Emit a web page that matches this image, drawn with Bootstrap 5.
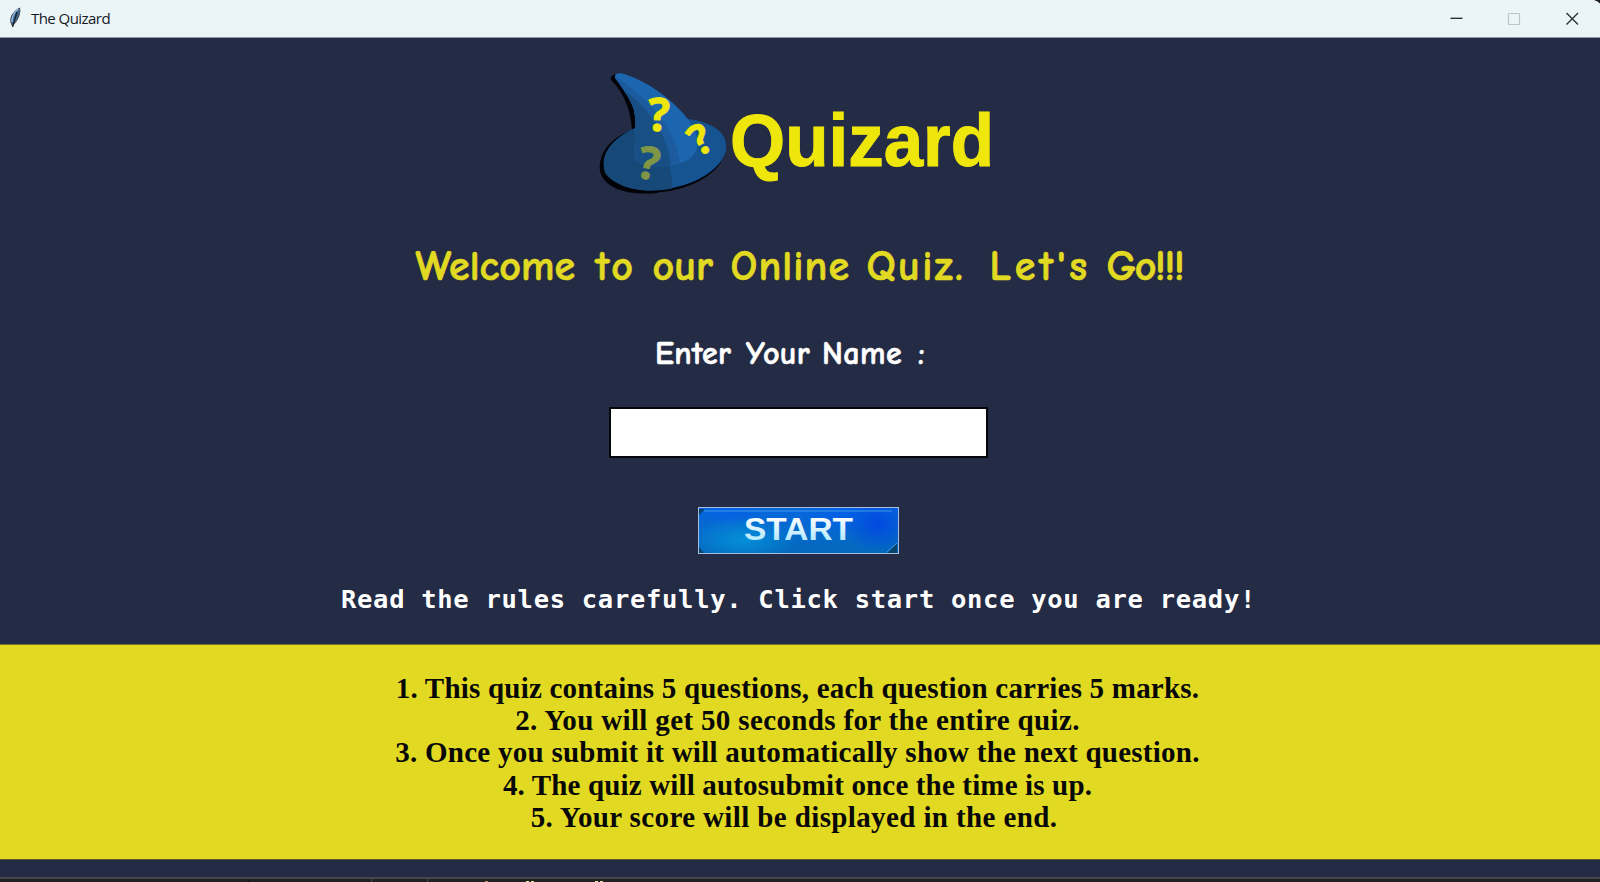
<!DOCTYPE html>
<html lang="en">
<head>
<meta charset="utf-8">
<meta name="viewport" content="width=device-width, initial-scale=1">
<title>The Quizard</title>
<link href="https://cdn.jsdelivr.net/npm/bootstrap@5.3.0/dist/css/bootstrap.min.css" rel="stylesheet">
<style>
  html, body { height: 100%; }
  body { background: #242b44; font-family: "Liberation Sans", sans-serif; }
  .app { height: 882px; }
  .titlebar { height: 38px; background: #ebf5f8; border-bottom: 1px solid #8d95a6; color: #15191d; font: 15px/37px "Open Sans", "Noto Sans", sans-serif; }
  .titlebar .caption { letter-spacing: -.55px; }
  .logo { height: 172px; }
  .comic { font-family: "Comic Sans MS", "Comic Neue", "Open Sans", sans-serif; font-weight: 700; white-space: pre; }
  .comic span { display: inline-block; }
  .welcome { height: 114px; padding-top: 27px; font-size: 42px; line-height: 60px; color: #e2da22; -webkit-text-stroke: .7px #e2da22; }
  .welcome span:nth-child(1) { width: 180px; }
  .welcome span:nth-child(2) { width: 57px; letter-spacing: 3px; }
  .welcome span:nth-child(3) { width: 78px; }
  .welcome span:nth-child(4) { width: 136px; letter-spacing: 1.1px; }
  .welcome span:nth-child(5) { width: 123px; letter-spacing: 2.4px; }
  .welcome span:nth-child(6) { width: 117px; letter-spacing: 3.8px; }
  .welcome span:nth-child(7) { width: 78px; letter-spacing: -1.5px; }
  .ask { height: 83px; font-size: 32px; line-height: 60px; color: #fff; padding-right: 15px; -webkit-text-stroke: .6px #fff; }
  .ask span:nth-child(1) { width: 91px; letter-spacing: .3px; }
  .ask span:nth-child(2) { width: 76px; letter-spacing: .3px; }
  .ask span:nth-child(3) { width: 96px; letter-spacing: .5px; }
  .ask span:nth-child(4) { width: 12px; }
  .name-box { width: 379px; height: 51px; border: 2px solid #05060a; border-radius: 0; background: #fff; margin-right: 4px; }
  .start { width: 201px; height: 47px; margin-top: 49px; margin-right: 4px; border: 1.5px solid #a9bede; border-radius: 0; overflow: hidden;
    background: radial-gradient(ellipse 55px 22px at 22% 70%, #0590d8, transparent), radial-gradient(ellipse 35px 28px at 90% 35%, #0249e0, transparent), radial-gradient(ellipse 50px 22px at 72% 10%, #0460e6, transparent), radial-gradient(ellipse 40px 18px at 15% 0%, #0560e8, transparent), linear-gradient(#0668dc, #0469bd); }
  .ready { height: 90px; padding: 27px 3px 0 0; font: bold 25.5px/36px "DejaVu Sans Mono", monospace; letter-spacing: .7px; white-space: pre; color: #fff; }
  .rules { height: 216px; padding: 27px 5px 0 0; background: #e2da22; border-top: 1px solid #70712e; border-bottom: 1px solid #5d5e2b; color: #080808; font: bold 29px/32.2px "Liberation Serif", serif; }
  .rules div { white-space: pre; }
  .rules div:nth-child(1) { letter-spacing: .21px; }
  .rules div:nth-child(2) { letter-spacing: .35px; }
  .rules div:nth-child(3) { letter-spacing: .26px; }
  .rules div:nth-child(4) { letter-spacing: .15px; }
  .rules div:nth-child(5) { letter-spacing: .38px; padding-right: 7px; }
  .gap-strip { height: 17px; }
  .desk { height: 5px; background: #202020; border-top: 2px solid #45454c; }
</style>
</head>
<body class="overflow-hidden">
<div class="app d-flex flex-column">
  <header class="titlebar d-flex align-items-center justify-content-between flex-shrink-0">
    <div class="d-flex align-items-center">
      <svg width="31" height="37" viewBox="0 0 31 37"><path d="M12.500 26C9.500 21 9.500 14 19.500 8C21 12 18 20 14 24Z" fill="#3f638c" stroke="#3d4651" stroke-width="1"/><path d="M18.500 9C14 12 12 17 12 22" fill="none" stroke="#8fbde8" stroke-width="1.500"/><path d="M17 12L12.600 27" stroke="#18212e" stroke-width="1.200"/></svg>
      <span class="caption">The Quizard</span>
    </div>
    <svg width="160" height="37" viewBox="0 0 160 37" fill="none"><path d="M10.500 18.300h12" stroke="#222" stroke-width="1.300"/><rect x="68.500" y="13.500" width="11" height="11" rx=".8" stroke="#bcc4c8" stroke-width="1.200"/><path d="M126.500 13L138 24.500M138 13L126.500 24.500" stroke="#2b3033" stroke-width="1.400"/><path d="M154 0Q158 1 160 3.500V0Z" fill="#1d1d1d"/></svg>
  </header>

  <div class="logo flex-shrink-0">
    <svg width="1600" height="172" viewBox="0 38 1600 172" class="d-block">
      <defs><clipPath id="cone"><path d="M615 75C618 72 623 73 630 76C656 86 680 107 690 122C701 138 700 154 686 161C668 169 638 168 634 157C635 142 637 124 634 110C631 100 622 87 615 78Z"/></clipPath></defs>
      <path d="M617 74C612 74 609 78 612 81C622 91 631 108 632 130C612 137 598 152 600 171C604 188 626 196 658 193L640 150L637 112Z" fill="#020307"/>
      <ellipse cx="663.500" cy="156.500" rx="62" ry="35" transform="rotate(-10 663.500 156.500)" fill="#020307"/>
      <ellipse cx="665" cy="154.500" rx="62" ry="34.500" transform="rotate(-11 665 154.500)" fill="#155391"/>
      <path d="M634 130C660 145 672 158 672 188.500C646 194 617 189 605 173C599 154 614 137 634 130Z" fill="#164977"/>
      <g clip-path="url(#cone)">
        <path d="M610 68H705V175H610Z" fill="#1c66b0"/>
        <path d="M615 76C650 100 676 126 682 172H615Z" fill="#1c5c9e"/>
        <path d="M622 89C648 107 668 132 672 172H622Z" fill="#184f84"/>
      </g>
      <g font-family="Open Sans, sans-serif" font-weight="700" text-anchor="middle" stroke-width=".8">
        <text x="659" y="131" font-size="46" fill="#efe70c" stroke="#efe70c" transform="rotate(2 659 115)">?</text>
        <text x="700" y="154" font-size="42" fill="#efe70c" stroke="#efe70c" transform="rotate(-31 700 139)">?</text>
        <text x="649" y="179" font-size="45" fill="#809647" stroke="#809647" transform="rotate(10 649 163)">?</text>
      </g>
      <text x="730" y="165.500" font-family="Liberation Sans, sans-serif" font-weight="700" font-size="75" textLength="264" lengthAdjust="spacingAndGlyphs" fill="#efe70c" stroke="#efe70c" stroke-width="1">Quizard</text>
    </svg>
  </div>

  <main class="d-flex flex-column align-items-center flex-shrink-0">
    <h1 class="welcome comic d-flex m-0"><span>Welcome </span><span>to </span><span>our </span><span>Online </span><span>Quiz. </span><span>Let's </span><span>Go!!!</span></h1>
    <label for="name" class="ask comic d-flex"><span>Enter </span><span>Your </span><span>Name </span><span>:</span></label>
    <input id="name" type="text" class="form-control name-box" autocomplete="off">
    <button type="button" class="btn start p-0 d-block">
      <svg width="198" height="44" viewBox="0 0 198 44" class="d-block">
        <defs><linearGradient id="ice" x1="0" y1="0" x2="0" y2="1"><stop offset=".2" stop-color="#f6fbff"/><stop offset="1" stop-color="#a2e4ff"/></linearGradient></defs>
        <path d="M0 0H6L0 6ZM0 44V38L5 44ZM198 44V34L188 44Z" fill="#09446f"/>
        <path d="M5 2H193M198 34L188 43" stroke="#399be9" fill="none"/>
        <text x="45" y="31" font-family="Liberation Sans, sans-serif" font-weight="700" font-size="31" textLength="109" lengthAdjust="spacingAndGlyphs" fill="url(#ice)">START</text>
      </svg>
    </button>
  </main>

  <p class="ready text-center m-0 flex-shrink-0">Read the rules carefully. Click start once you are ready!</p>

  <section class="rules text-center flex-shrink-0">
    <div>1. This quiz contains 5 questions, each question carries 5 marks.</div>
    <div>2. You will get 50 seconds for the entire quiz.</div>
    <div>3. Once you submit it will automatically show the next question.</div>
    <div>4. The quiz will autosubmit once the time is up.</div>
    <div>5. Your score will be displayed in the end.</div>
  </section>
  <div class="gap-strip flex-shrink-0"></div>
  <footer class="desk flex-shrink-0">
    <svg width="1600" height="3" viewBox="0 0 1600 3" class="d-block"><path d="M248.500 0v3" stroke="#111"/><path d="M371.500 0v3M427.500 0v3" stroke="#444"/><path d="M485 2.500h3" stroke="#c9875e"/><path d="M526 2.500h3M531 2.500h3M595 2.500h3M600 2.500h3" stroke="#e8e59a"/></svg>
  </footer>
</div>
<script src="https://cdn.jsdelivr.net/npm/bootstrap@5.3.0/dist/js/bootstrap.bundle.min.js"></script>
</body>
</html>
